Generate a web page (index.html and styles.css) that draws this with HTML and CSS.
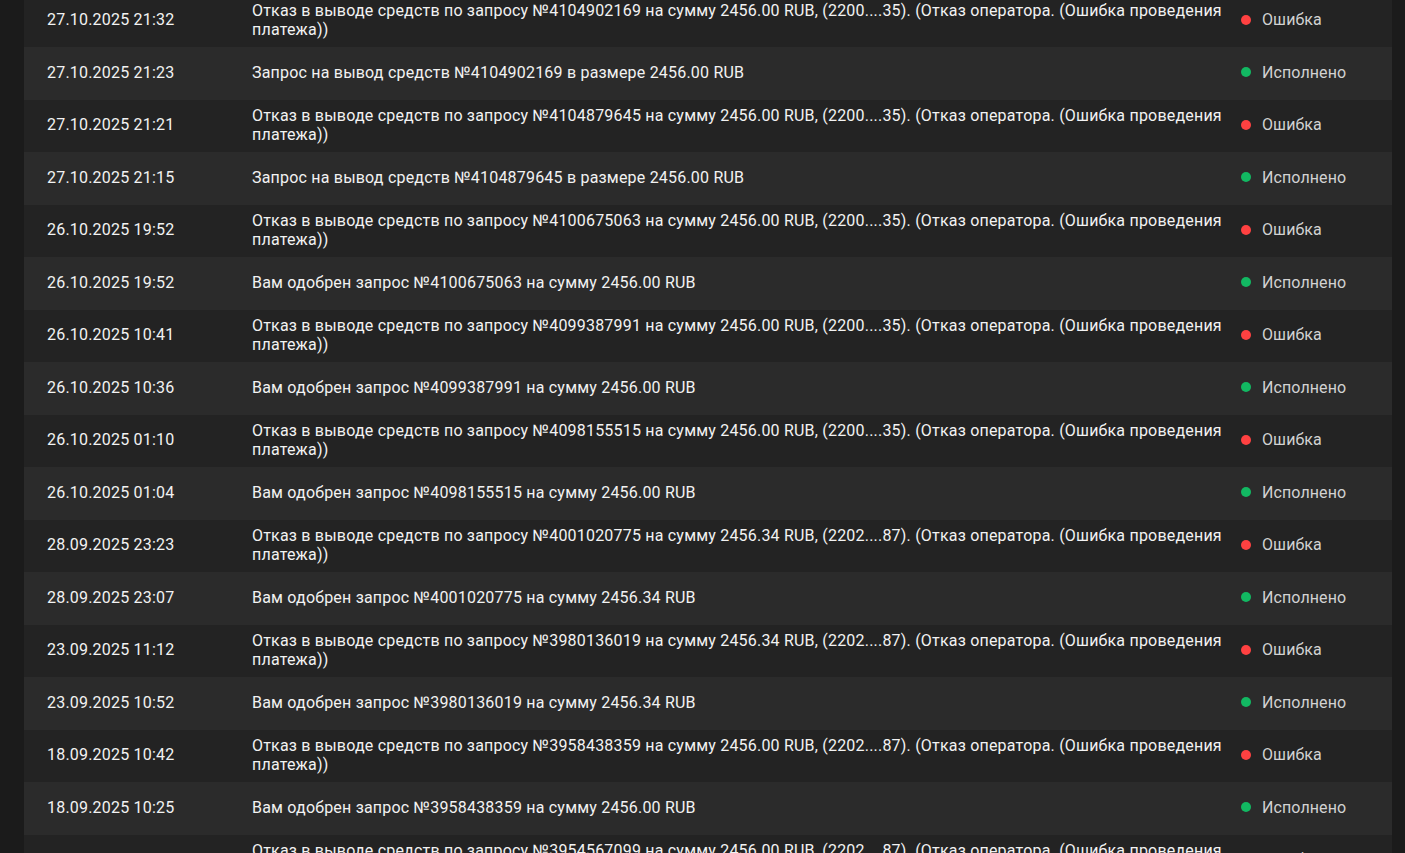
FILE: index.html
```html
<!DOCTYPE html>
<html lang="ru">
<head>
    <meta charset="UTF-8">
    <meta name="viewport" content="width=device-width, initial-scale=1.0">
    <title>История операций</title>
    <link rel="stylesheet" href="styles.css">
</head>
<body>
    <div class="page">
        <div class="history">
            <div class="row">
                <div class="date">27.10.2025 21:32</div>
                <div class="desc">Отказ в выводе средств по запросу №4104902169 на сумму 2456.00 RUB, (2200....35). (Отказ оператора. (Ошибка проведения платежа))</div>
                <div class="status error"><span class="dot"></span>Ошибка</div>
            </div>
            <div class="row">
                <div class="date">27.10.2025 21:23</div>
                <div class="desc">Запрос на вывод средств №4104902169 в размере 2456.00 RUB</div>
                <div class="status done"><span class="dot"></span>Исполнено</div>
            </div>
            <div class="row">
                <div class="date">27.10.2025 21:21</div>
                <div class="desc">Отказ в выводе средств по запросу №4104879645 на сумму 2456.00 RUB, (2200....35). (Отказ оператора. (Ошибка проведения платежа))</div>
                <div class="status error"><span class="dot"></span>Ошибка</div>
            </div>
            <div class="row">
                <div class="date">27.10.2025 21:15</div>
                <div class="desc">Запрос на вывод средств №4104879645 в размере 2456.00 RUB</div>
                <div class="status done"><span class="dot"></span>Исполнено</div>
            </div>
            <div class="row">
                <div class="date">26.10.2025 19:52</div>
                <div class="desc">Отказ в выводе средств по запросу №4100675063 на сумму 2456.00 RUB, (2200....35). (Отказ оператора. (Ошибка проведения платежа))</div>
                <div class="status error"><span class="dot"></span>Ошибка</div>
            </div>
            <div class="row">
                <div class="date">26.10.2025 19:52</div>
                <div class="desc">Вам одобрен запрос №4100675063 на сумму 2456.00 RUB</div>
                <div class="status done"><span class="dot"></span>Исполнено</div>
            </div>
            <div class="row">
                <div class="date">26.10.2025 10:41</div>
                <div class="desc">Отказ в выводе средств по запросу №4099387991 на сумму 2456.00 RUB, (2200....35). (Отказ оператора. (Ошибка проведения платежа))</div>
                <div class="status error"><span class="dot"></span>Ошибка</div>
            </div>
            <div class="row">
                <div class="date">26.10.2025 10:36</div>
                <div class="desc">Вам одобрен запрос №4099387991 на сумму 2456.00 RUB</div>
                <div class="status done"><span class="dot"></span>Исполнено</div>
            </div>
            <div class="row">
                <div class="date">26.10.2025 01:10</div>
                <div class="desc">Отказ в выводе средств по запросу №4098155515 на сумму 2456.00 RUB, (2200....35). (Отказ оператора. (Ошибка проведения платежа))</div>
                <div class="status error"><span class="dot"></span>Ошибка</div>
            </div>
            <div class="row">
                <div class="date">26.10.2025 01:04</div>
                <div class="desc">Вам одобрен запрос №4098155515 на сумму 2456.00 RUB</div>
                <div class="status done"><span class="dot"></span>Исполнено</div>
            </div>
            <div class="row">
                <div class="date">28.09.2025 23:23</div>
                <div class="desc">Отказ в выводе средств по запросу №4001020775 на сумму 2456.34 RUB, (2202....87). (Отказ оператора. (Ошибка проведения платежа))</div>
                <div class="status error"><span class="dot"></span>Ошибка</div>
            </div>
            <div class="row">
                <div class="date">28.09.2025 23:07</div>
                <div class="desc">Вам одобрен запрос №4001020775 на сумму 2456.34 RUB</div>
                <div class="status done"><span class="dot"></span>Исполнено</div>
            </div>
            <div class="row">
                <div class="date">23.09.2025 11:12</div>
                <div class="desc">Отказ в выводе средств по запросу №3980136019 на сумму 2456.34 RUB, (2202....87). (Отказ оператора. (Ошибка проведения платежа))</div>
                <div class="status error"><span class="dot"></span>Ошибка</div>
            </div>
            <div class="row">
                <div class="date">23.09.2025 10:52</div>
                <div class="desc">Вам одобрен запрос №3980136019 на сумму 2456.34 RUB</div>
                <div class="status done"><span class="dot"></span>Исполнено</div>
            </div>
            <div class="row">
                <div class="date">18.09.2025 10:42</div>
                <div class="desc">Отказ в выводе средств по запросу №3958438359 на сумму 2456.00 RUB, (2202....87). (Отказ оператора. (Ошибка проведения платежа))</div>
                <div class="status error"><span class="dot"></span>Ошибка</div>
            </div>
            <div class="row">
                <div class="date">18.09.2025 10:25</div>
                <div class="desc">Вам одобрен запрос №3958438359 на сумму 2456.00 RUB</div>
                <div class="status done"><span class="dot"></span>Исполнено</div>
            </div>
            <div class="row">
                <div class="date">18.09.2025 10:11</div>
                <div class="desc">Отказ в выводе средств по запросу №3954567099 на сумму 2456.00 RUB, (2202....87). (Отказ оператора. (Ошибка проведения платежа))</div>
                <div class="status error"><span class="dot"></span>Ошибка</div>
            </div>
        </div>
    </div>
</body>
</html>
```

FILE: styles.css
```css
body {
    font-family: Roboto, "Noto Sans", Arial, sans-serif;
    background-color: #1b1b1b;
    color: #f2f2f2;
    margin: 0;
    padding: 0;
    font-size: 16px;
    line-height: 19px;
    letter-spacing: 0.2px;
    overflow: hidden;
}
.page {
    padding: 0 13px 0 24px;
}
.history {
    margin-top: -5.5px; /* the list is scrolled a little */
}
.row {
    display: grid;
    grid-template-columns: 228px 989px 1fr;
    align-items: center;
    height: 52.5px;
    padding-bottom: 2px;
    box-sizing: border-box;
    background-color: #232323;
}
.row:nth-child(even) {
    background-color: #2b2b2b;
}
.date {
    padding-left: 23px;
}
.desc {
    padding-right: 14px;
}
.status {
    display: flex;
    align-items: center;
    color: #d2d2d2;
    letter-spacing: 0.1px;
}
.dot {
    width: 10px;
    height: 10px;
    border-radius: 50%;
    margin-right: 11px;
}
.error .dot {
    background-color: #ff4141;
}
.done .dot {
    background-color: #12b862;
}
```
